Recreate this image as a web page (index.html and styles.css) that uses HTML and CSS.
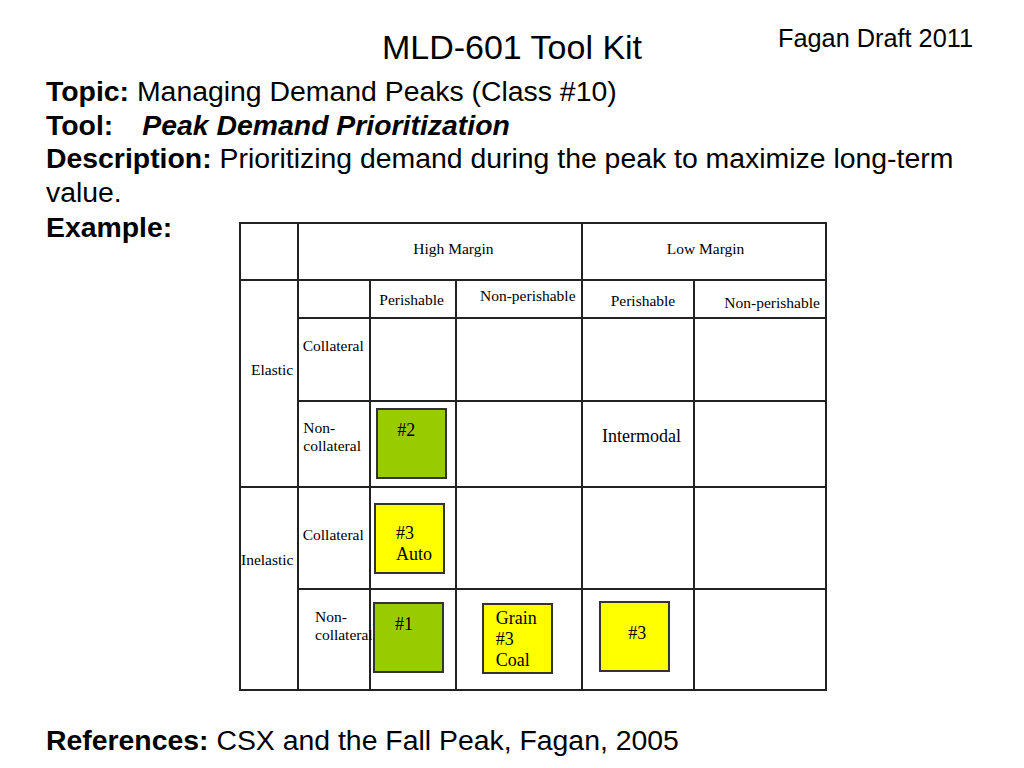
FILE: index.html
```html
<!DOCTYPE html>
<html lang="en">
<head>
<meta charset="utf-8">
<title>MLD-601 Tool Kit</title>
<link rel="stylesheet" href="styles.css">
</head>
<body>
<div class="slide">
  <header class="head">
    <h1 class="title">MLD-601 Tool Kit</h1>
    <div class="draft">Fagan Draft 2011</div>
  </header>
  <main class="content">
    <p class="line"><b>Topic:</b> Managing Demand Peaks (Class #10)</p>
    <p class="line"><b>Tool:</b><b class="tool-name">Peak Demand Prioritization</b></p>
    <p class="line"><b>Description:</b> <span>Prioritizing demand during the peak to maximize long-term</span> <span>value.</span></p>
    <div class="example">
      <p class="line"><b>Example:</b></p>
      <div class="matrix">
        <div class="c"></div>
        <div class="c span-high hm">High Margin</div>
        <div class="c span-low lm">Low Margin</div>

        <div class="c span-elastic elastic">Elastic</div>
        <div class="c"></div>
        <div class="c per-h">Perishable</div>
        <div class="c nper-h">Non-perishable</div>
        <div class="c per-l">Perishable</div>
        <div class="c nper-l">Non-perishable</div>

        <div class="c coll-1">Collateral</div>
        <div class="c"></div>
        <div class="c"></div>
        <div class="c"></div>
        <div class="c"></div>

        <div class="c ncoll-1">Non-<br>collateral</div>
        <div class="c"><div class="box green b2">#2</div></div>
        <div class="c"></div>
        <div class="c intermodal">Intermodal</div>
        <div class="c"></div>

        <div class="c span-inelastic inelastic">Inelastic</div>
        <div class="c coll-2">Collateral</div>
        <div class="c"><div class="box yellow b3auto">#3<br>Auto</div></div>
        <div class="c"></div>
        <div class="c"></div>
        <div class="c"></div>

        <div class="c ncoll-2">Non-<br>collateral</div>
        <div class="c"><div class="box green b1">#1</div></div>
        <div class="c"><div class="box yellow bgrain">Grain<br>#3<br>Coal</div></div>
        <div class="c"><div class="box yellow b3">#3</div></div>
        <div class="c"></div>
      </div>
    </div>
    <p class="line refs"><b>References:</b> CSX and the Fall Peak, Fagan, 2005</p>
  </main>
</div>
</body>
</html>
```

FILE: styles.css
```css
html, body {
  margin: 0;
  padding: 0;
  background: #fff;
}

body {
  font-family: "Liberation Sans", Arial, sans-serif;
  color: #000;
}

.slide {
  width: 1024px;
  height: 768px;
  background: #fff;
  overflow: hidden;
}

/* Header */
.head {
  display: grid;
  grid-template-columns: 1fr auto 1fr;
  align-items: start;
  padding-top: 24px;
}

.title {
  grid-column: 2;
  margin: 0;
  padding-top: 2.5px;
  font-size: 34px;
  line-height: 40px;
  font-weight: normal;
  white-space: nowrap;
}

.draft {
  grid-column: 3;
  justify-self: end;
  margin-right: 51px;
  font-size: 25.3px;
  line-height: 28px;
  white-space: nowrap;
}

/* Body text */
.content {
  padding: 8.5px 50px 0 46px;
}

.line {
  margin: 0;
  font-size: 28.4px;
  line-height: 33.5px;
}

.tool-name {
  font-style: italic;
  margin-left: 29px;
}

.example {
  display: grid;
  grid-template-columns: 193px auto;
  align-items: start;
  margin-top: 1.5px;
}

.refs {
  margin-top: 33px;
}

/* Matrix */
.matrix {
  margin-top: 11.4px;
  display: grid;
  grid-template-columns: 58px 72px 86px 126px 112px 132px;
  grid-template-rows: 57px 38px 83px 86px 102px 101px;
  width: max-content;
  border-left: 2px solid #222;
  border-top: 2px solid #222;
  font-family: "Liberation Serif", "Times New Roman", serif;
  font-size: 15.5px;
  line-height: 18px;
  color: #000;
}

.c {
  box-sizing: border-box;
  border-right: 2px solid #222;
  border-bottom: 2px solid #222;
  white-space: nowrap;
  min-width: 0;
}

.span-high { grid-column: span 3; }
.span-low { grid-column: span 2; }
.span-elastic { grid-row: span 3; }
.span-inelastic { grid-row: span 2; }

.hm { padding: 16.5px 0 0 114.3px; }
.lm { padding: 16.5px 0 0 83.7px; }
.per-h { padding: 10px 0 0 8.3px; }
.nper-h { padding: 6px 0 0 23px; }
.per-l { padding: 11px 0 0 27.7px; }
.nper-l { padding: 13.5px 0 0 29.3px; }
.elastic { padding: 79.8px 0 0 10px; }
.inelastic { padding: 62.8px 0 0 0; }
.coll-1 { padding: 17.8px 0 0 3.7px; }
.ncoll-1 { padding: 16.8px 0 0 4.3px; }
.coll-2 { padding: 37.8px 0 0 3.7px; }

/* label text runs over the next cell's box edge, as in the source slide */
.ncoll-2 {
  padding: 18.1px 0 0 16px;
  position: relative;
  z-index: 1;
}

.intermodal {
  padding: 24.4px 0 0 19px;
  font-size: 18px;
  line-height: 21px;
}

/* Coloured boxes */
.box {
  box-sizing: border-box;
  width: 71px;
  height: 71px;
  border: 2px solid #333;
  font-size: 18px;
  line-height: 21px;
}

.green { background: #99cc00; }
.yellow { background: #ffff00; }

.b2 { margin: 5.7px 0 0 4.7px; padding: 10.4px 0 0 19.6px; }
.b3auto { margin: 15.3px 0 0 3.3px; padding: 18.1px 0 0 19.7px; line-height: 20.7px; }
.b1 { margin: 11.7px 0 0 1.7px; padding: 10.4px 0 0 20.3px; }
.bgrain { margin: 13.3px 0 0 24.7px; padding: 3.1px 0 0 12px; }
.b3 { margin: 10.7px 0 0 16.3px; padding: 20.7px 0 0 27px; }
```
